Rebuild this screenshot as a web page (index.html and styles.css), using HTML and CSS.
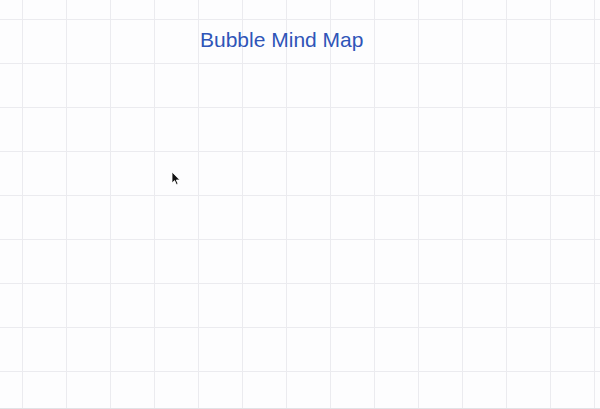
FILE: index.html
```html
<!DOCTYPE html>
<html lang="en">
<head>
<meta charset="utf-8">
<title>Bubble Mind Map</title>
<link rel="stylesheet" href="styles.css">
</head>
<body>
<main class="canvas">
  <h1 class="title">Bubble Mind Map</h1>
  <svg class="cursor" width="10" height="15" viewBox="0 0 10 15" aria-hidden="true">
    <path d="M1 1 L1 12 L3.6 9.6 L5.4 13.6 L7 12.9 L5.3 9 L8.8 9 Z" fill="#111" stroke="#fff" stroke-width="0.8" stroke-linejoin="round"/>
  </svg>
</main>
</body>
</html>
```

FILE: styles.css
```css
html, body {
  margin: 0;
  padding: 0;
  width: 600px;
  height: 409px;
  overflow: hidden;
  background: #fdfdfe;
}

.canvas {
  position: relative;
  width: 600px;
  height: 409px;
  box-sizing: border-box;
  border-bottom: 1px solid #e2e2e6;
  background-color: #fdfdfe;
  background-image:
    linear-gradient(to right, #ebebef 0, #ebebef 1px, transparent 1px),
    linear-gradient(to bottom, #ebebef 0, #ebebef 1px, transparent 1px);
  background-size: 44px 44px;
  background-position: 22px 19px;
  display: flex;
  flex-direction: column;
  align-items: flex-start;
}

.title {
  margin: 28px 0 0 200px;
  font-family: "Liberation Sans", Arial, sans-serif;
  font-weight: normal;
  font-size: 21px;
  line-height: 24px;
  color: #2f55b8;
  letter-spacing: 0;
}

.cursor {
  position: absolute;
  left: 171px;
  top: 171px;
}
```
